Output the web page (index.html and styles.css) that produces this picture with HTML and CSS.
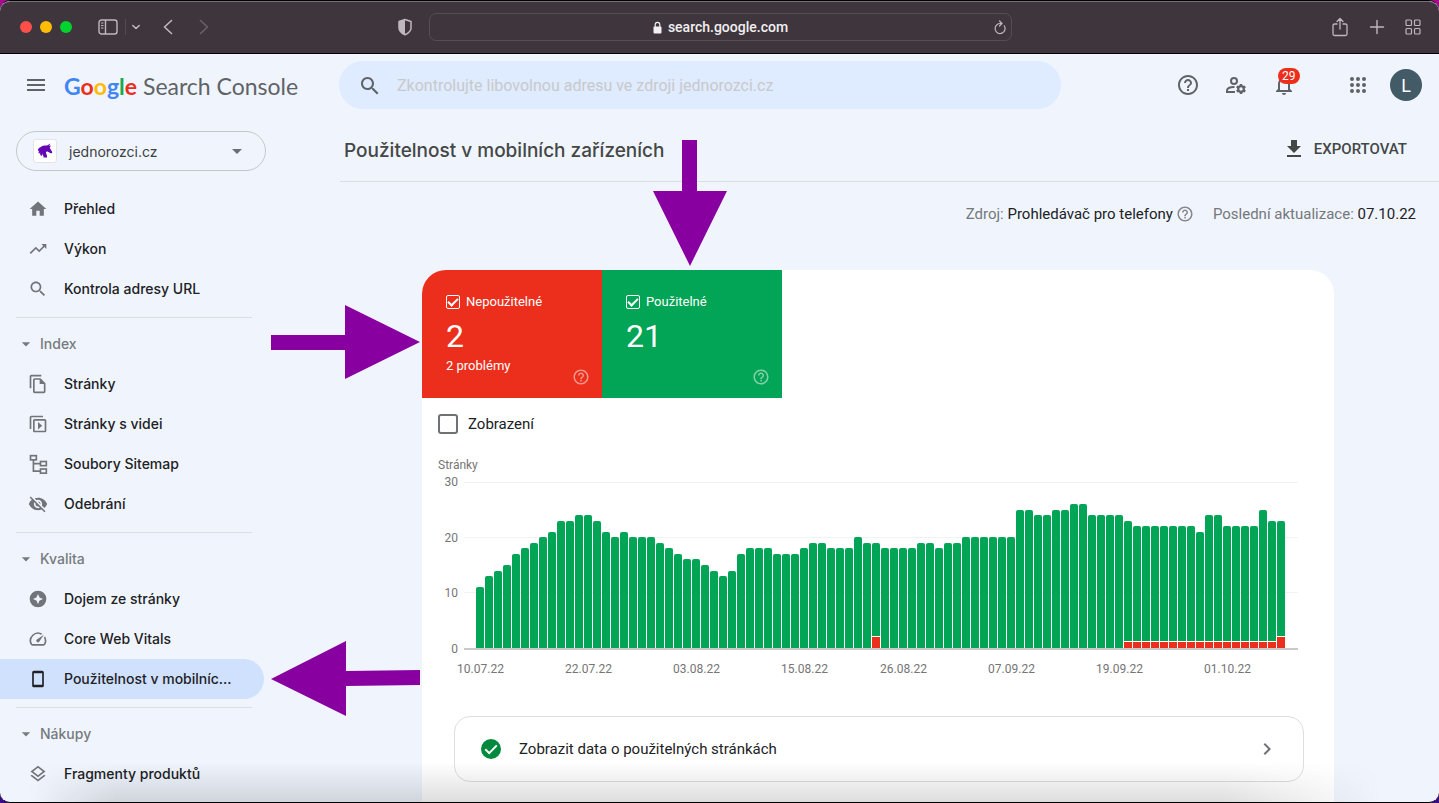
FILE: index.html
```html
<!DOCTYPE html>
<html lang="cs">
<head>
<meta charset="utf-8">
<meta name="viewport" content="width=device-width, initial-scale=1">
<title>Použitelnost v mobilních zařízeních</title>
<link rel="stylesheet" href="styles.css">
</head>
<body>
<svg class="defs" aria-hidden="true">
  <symbol id="i-help" viewBox="0 0 24 24"><path d="M11 18h2v-2h-2v2zm1-16C6.480 2 2 6.480 2 12s4.480 10 10 10 10-4.480 10-10S17.520 2 12 2zm0 18c-4.410 0-8-3.590-8-8s3.590-8 8-8 8 3.590 8 8-3.590 8-8 8zm0-14c-2.210 0-4 1.790-4 4h2c0-1.100.9-2 2-2s2 .9 2 2c0 2-3 1.750-3 5h2c0-2.250 3-2.500 3-5 0-2.210-1.790-4-4-4z"/></symbol>
  <symbol id="i-search" viewBox="0 0 24 24"><path d="M15.500 14h-.79l-.28-.27C15.410 12.590 16 11.110 16 9.500 16 5.910 13.090 3 9.500 3S3 5.910 3 9.500 5.910 16 9.500 16c1.610 0 3.090-.59 4.230-1.570l.27.28v.79l5 4.990L20.490 19l-4.990-5zm-6 0C7.010 14 5 11.990 5 9.500S7.010 5 9.500 5 14 7.010 14 9.500 11.990 14 9.500 14z"/></symbol>
  <symbol id="i-caret" viewBox="0 0 24 24"><path d="M7 10l5 5 5-5z"/></symbol>
</svg>
<div class="window">
  <header class="browser-bar">
    <div class="browser-left">
      <span class="light light-red"></span><span class="light light-yellow"></span><span class="light light-green"></span>
      <button class="bar-btn btn-sidebar" aria-label="Postranní panel"><svg width="20" height="16" viewBox="0 0 20 16" fill="none" stroke="currentColor"><rect x="1" y="1" width="18" height="14" rx="2.500" stroke-width="1.400"/><path d="M7.500 1v14" stroke-width="1.400"/><path d="M3 4h2.500M3 6.500h2.500M3 9h2.500"/></svg></button>
      <button class="bar-btn btn-tabs" aria-label="Skupiny panelů"><svg width="10" height="6" viewBox="0 0 10 6" fill="none" stroke="currentColor" stroke-width="1.600" stroke-linecap="round" stroke-linejoin="round"><path d="M1.800 1.500L5 4.500l3.200-3"/></svg></button>
      <button class="bar-btn btn-back" aria-label="Zpět"><svg width="10" height="16" viewBox="0 0 10 16" fill="none" stroke="currentColor" stroke-width="1.600" stroke-linecap="round" stroke-linejoin="round"><path d="M8.500 1.500L1.500 8l7 6.500"/></svg></button>
      <button class="bar-btn btn-forward" aria-label="Vpřed"><svg width="10" height="16" viewBox="0 0 10 16" fill="none" stroke="currentColor" stroke-width="1.600" stroke-linecap="round" stroke-linejoin="round"><path d="M1.500 1.500l7 6.500-7 6.500"/></svg></button>
    </div>
    <div class="browser-address">
      <button class="bar-btn" aria-label="Ochrana soukromí"><svg width="16" height="18" viewBox="0 0 16 18"><path d="M8 1.500L14 3.500V10c0 3.300-3 5.400-6 6.800C5 15.400 2 13.300 2 10V3.500z" fill="none" stroke="currentColor" stroke-width="1.500" stroke-linejoin="round"/><path d="M8 1.500v15.300C5 15.400 2 13.300 2 10V3.500z" fill="currentColor"/></svg></button>
      <div class="url-box">
        <span class="url-text"><svg width="9" height="13" viewBox="0 0 9 13"><rect x="0.500" y="5.500" width="8" height="7" rx="1" fill="currentColor"/><path d="M2.200 6V3.600a2.300 2.300 0 0 1 4.600 0V6" fill="none" stroke="currentColor" stroke-width="1.200"/></svg>search.google.com</span>
        <button class="bar-btn btn-reload" aria-label="Obnovit"><svg width="14" height="15" viewBox="0 0 14 15" fill="none" stroke="currentColor" stroke-width="1.200" stroke-linecap="round" stroke-linejoin="round"><path d="M11.300 5.800A5 5 0 1 1 7 3.500h1.600"/><path d="M6.500 1l2.500 2.500L6.500 6"/></svg></button>
      </div>
    </div>
    <div class="browser-right">
      <button class="bar-btn" aria-label="Sdílet"><svg width="18" height="20" viewBox="0 0 18 20" fill="none" stroke="currentColor" stroke-width="1.300" stroke-linecap="round" stroke-linejoin="round"><path d="M6 7H3.500C2.500 7 2 7.500 2 8.500V17c0 1 .5 1.500 1.500 1.500h11c1 0 1.500-.5 1.500-1.500V8.500c0-1-.5-1.500-1.500-1.500H12"/><path d="M9 12V1.500M6 4.500l3-3 3 3"/></svg></button>
      <button class="bar-btn" aria-label="Nový panel"><svg width="16" height="16" viewBox="0 0 16 16" stroke="currentColor" stroke-width="1.400" stroke-linecap="round"><path d="M8 1.500v13M1.500 8h13"/></svg></button>
      <button class="bar-btn" aria-label="Přehled panelů"><svg width="16" height="16" viewBox="0 0 16 16" fill="none" stroke="currentColor" stroke-width="1.200"><rect x="1" y="1" width="5.500" height="5.500" rx="1"/><rect x="9.500" y="1" width="5.500" height="5.500" rx="1"/><rect x="1" y="9.500" width="5.500" height="5.500" rx="1"/><rect x="9.500" y="9.500" width="5.500" height="5.500" rx="1"/></svg></button>
    </div>
  </header>

  <div class="app">
    <header class="app-header">
      <div class="brand">
        <button class="icon-btn" aria-label="Hlavní nabídka"><svg width="24" height="24" viewBox="0 0 24 24"><path d="M3 18h18v-2H3v2zm0-5h18v-2H3v2zm0-7v2h18V6H3z"/></svg></button>
        <a class="logo" href="#"><span class="google"><span class="g-blue">G</span><span class="g-red">o</span><span class="g-yellow">o</span><span class="g-blue">g</span><span class="g-green">l</span><span class="g-red">e</span></span> <span class="product">Search Console</span></a>
      </div>
      <label class="search">
        <svg width="24" height="24"><use href="#i-search"/></svg>
        <input type="text" aria-label="Kontrola adresy URL" placeholder="Zkontrolujte libovolnou adresu ve zdroji jednorozci.cz">
      </label>
      <div class="header-actions">
        <button class="icon-btn" aria-label="Nápověda"><svg width="24" height="24"><use href="#i-help"/></svg></button>
        <button class="icon-btn" aria-label="Uživatelská nastavení"><svg width="24" height="24" viewBox="0 0 24 24" fill="none" stroke="currentColor" stroke-width="2"><circle cx="10" cy="8" r="3"/><path d="M11 19H3v-1.500c0-2.500 3.500-3.700 7.500-3.500"/><circle cx="17" cy="16" r="2.800" stroke-width="2.200"/><path d="M17 11v2.500M17 18.500V21M12.700 13.500l2.100 1.200M19.200 17.300l2.100 1.200M12.700 18.500l2.100-1.200M19.200 14.700l2.100-1.200" stroke-width="2.400"/></svg></button>
        <button class="icon-btn bell" aria-label="Oznámení, 29"><svg width="24" height="24" viewBox="0 0 24 24"><path d="M12 22c1.100 0 2-.9 2-2h-4c0 1.100.89 2 2 2zm6-6v-5c0-3.070-1.640-5.640-4.500-6.320V4c0-.83-.67-1.500-1.500-1.500s-1.500.67-1.500 1.500v.68C7.630 5.360 6 7.920 6 11v5l-2 2v1h16v-1l-2-2zm-2 1H8v-6c0-2.480 1.510-4.500 4-4.500s4 2.020 4 4.500v6z"/></svg><span class="badge">29</span></button>
        <button class="icon-btn apps" aria-label="Aplikace Google"><svg width="24" height="24" viewBox="0 0 24 24"><circle cx="6" cy="6" r="2"/><circle cx="12" cy="6" r="2"/><circle cx="18" cy="6" r="2"/><circle cx="6" cy="12" r="2"/><circle cx="12" cy="12" r="2"/><circle cx="18" cy="12" r="2"/><circle cx="6" cy="18" r="2"/><circle cx="12" cy="18" r="2"/><circle cx="18" cy="18" r="2"/></svg></button>
        <button class="avatar" aria-label="Účet Google">L</button>
      </div>
    </header>

    <div class="body">
      <aside class="sidebar">
        <button class="property">
          <span class="favicon"><svg width="16" height="16" viewBox="0 0 16 16"><path d="M1 6.500C1.500 5 3 4.500 4.500 3.500 6.500 2.200 8 2.300 10 2.500L13.500.5 12 3l2-.5-1.300 2.300 2.500 4.200c.2 1.200-1 1.700-2 1.100L10.500 8.500C9.300 8.400 8.800 9 9 10c.3 1.500 1.500 2.500 1 4.500H6.500C7 13 5.500 12.500 5.500 10.500L4.800 13C3.300 12.500 2.800 11 3.200 9.500L2 10.800C1.200 9.800 1.800 8.500 2.200 7.500L.8 8z"/></svg></span>
          <span class="property-name">jednorozci.cz</span>
          <svg width="24" height="24"><use href="#i-caret"/></svg>
        </button>
        <nav class="nav">
          <a class="nav-item" href="#"><svg width="20" height="20" viewBox="0 0 24 24"><path d="M10 20v-6h4v6h5v-8h3L12 3 2 12h3v8z"/></svg><span>Přehled</span></a>
          <a class="nav-item" href="#"><svg width="20" height="20" viewBox="0 0 24 24"><path d="M16 6l2.290 2.290-4.880 4.880-4-4L2 16.590 3.410 18l6-6 4 4 6.300-6.290L22 12V6z"/></svg><span>Výkon</span></a>
          <a class="nav-item" href="#"><svg width="20" height="20"><use href="#i-search"/></svg><span>Kontrola adresy URL</span></a>
          <hr>
          <button class="nav-group"><svg width="20" height="20"><use href="#i-caret"/></svg>Index</button>
          <a class="nav-item" href="#"><svg width="20" height="20" viewBox="0 0 24 24"><path d="M16 1H4c-1.100 0-2 .9-2 2v14h2V3h12V1zm-1 4H8c-1.100 0-2 .9-2 2v14c0 1.100.9 2 2 2h11c1.100 0 2-.9 2-2V11l-6-6zM8 21V7h6v5h5v9H8z"/></svg><span>Stránky</span></a>
          <a class="nav-item" href="#"><svg width="20" height="20" viewBox="0 0 24 24"><path d="M18 2H4c-1.100 0-2 .9-2 2v14h2V4h14V2z"/><path d="M20 6H8c-1.100 0-2 .9-2 2v12c0 1.100.9 2 2 2h12c1.100 0 2-.9 2-2V8c0-1.100-.9-2-2-2zm0 14H8V8h12v12zM12 9.500v9l5-4.500z"/></svg><span>Stránky s videi</span></a>
          <a class="nav-item" href="#"><svg width="20" height="20" viewBox="0 0 24 24" fill="none" stroke="currentColor" stroke-width="2"><rect x="3" y="2" width="7" height="5"/><rect x="15" y="9" width="7" height="5"/><rect x="15" y="18" width="7" height="5"/><path d="M6.500 7v13.500H15M6.500 11.500H15"/></svg><span>Soubory Sitemap</span></a>
          <a class="nav-item" href="#"><svg width="20" height="20" viewBox="0 0 24 24"><path d="M12 7c2.760 0 5 2.240 5 5 0 .65-.13 1.260-.36 1.830l2.920 2.920c1.510-1.260 2.700-2.890 3.430-4.750-1.730-4.390-6-7.500-11-7.500-1.400 0-2.740.25-3.980.7l2.160 2.160C10.740 7.130 11.350 7 12 7zM2 4.270l2.280 2.280.46.46C3.080 8.300 1.780 10.020 1 12c1.730 4.390 6 7.500 11 7.500 1.550 0 3.030-.3 4.380-.84l.42.42L19.730 22 21 20.730 3.270 3 2 4.270zM7.530 9.800l1.550 1.550c-.05.21-.08.43-.08.65 0 1.660 1.340 3 3 3 .22 0 .44-.03.65-.08l1.550 1.550c-.67.33-1.410.53-2.200.53-2.760 0-5-2.240-5-5 0-.79.2-1.530.53-2.200zm4.310-.78l3.150 3.150.02-.16c0-1.660-1.340-3-3-3l-.17.01z"/></svg><span>Odebrání</span></a>
          <hr>
          <button class="nav-group"><svg width="20" height="20"><use href="#i-caret"/></svg>Kvalita</button>
          <a class="nav-item" href="#"><svg width="20" height="20" viewBox="0 0 24 24"><path fill-rule="evenodd" d="M12 2a10 10 0 1 0 0 20 10 10 0 0 0 0-20zm0 4l1.900 4.100L18 12l-4.100 1.900L12 18l-1.900-4.100L6 12l4.100-1.900z"/></svg><span>Dojem ze stránky</span></a>
          <a class="nav-item" href="#"><svg width="20" height="20" viewBox="0 0 24 24"><path d="M20.380 8.570l-1.230 1.850a8 8 0 0 1-.22 7.580H5.070A8 8 0 0 1 15.580 6.850l1.850-1.230A10 10 0 0 0 3.350 19a2 2 0 0 0 1.720 1h13.850a2 2 0 0 0 1.740-1 10 10 0 0 0-.27-10.440zm-9.790 6.840a2 2 0 0 0 2.830 0l5.660-8.490-8.490 5.660a2 2 0 0 0 0 2.830z"/></svg><span>Core Web Vitals</span></a>
          <a class="nav-item active" href="#" aria-current="page"><svg width="20" height="20" viewBox="0 0 24 24"><path fill-rule="evenodd" d="M7 2h10a2 2 0 0 1 2 2v16a2 2 0 0 1-2 2H7a2 2 0 0 1-2-2V4a2 2 0 0 1 2-2zm0 3v14h10V5z"/></svg><span>Použitelnost v mobilníc...</span></a>
          <hr>
          <button class="nav-group"><svg width="20" height="20"><use href="#i-caret"/></svg>Nákupy</button>
          <a class="nav-item" href="#"><svg width="20" height="20" viewBox="0 0 24 24"><path d="M11.990 18.540l-7.370-5.730L3 14.070l9 7 9-7-1.630-1.270-7.380 5.740zM12 16l7.360-5.730L21 9l-9-7-9 7 1.630 1.270L12 16zm0-11.470L17.740 9 12 13.470 6.260 9 12 4.530z"/></svg><span>Fragmenty produktů</span></a>
        </nav>
      </aside>

      <main class="main">
        <div class="title-row">
          <h1>Použitelnost v mobilních zařízeních</h1>
          <button class="export"><svg width="24" height="24" viewBox="0 0 24 24"><path d="M19 9h-4V3H9v6H5l7 7 7-7zM5 18v2h14v-2H5z"/></svg>EXPORTOVAT</button>
        </div>
        <div class="meta">
          <span class="meta-item"><span>Zdroj: <b>Prohledávač pro telefony</b></span><button class="help" aria-label="Nápověda ke zdroji"><svg width="18" height="18"><use href="#i-help"/></svg></button></span>
          <span class="meta-item"><span>Poslední aktualizace: <b>07.10.22</b></span></span>
        </div>
        <section class="card">
          <div class="tiles">
            <div class="tile tile-bad">
              <label class="tile-label"><input type="checkbox" class="tile-check" checked>Nepoužitelné</label>
              <div class="tile-value">2</div>
              <div class="tile-note">2 problémy</div>
              <button class="help" aria-label="Nápověda: Nepoužitelné"><svg width="18" height="18"><use href="#i-help"/></svg></button>
            </div>
            <div class="tile tile-good">
              <label class="tile-label"><input type="checkbox" class="tile-check" checked>Použitelné</label>
              <div class="tile-value">21</div>
              <button class="help" aria-label="Nápověda: Použitelné"><svg width="18" height="18"><use href="#i-help"/></svg></button>
            </div>
          </div>
          <label class="impressions"><input type="checkbox">Zobrazení</label>
          <div class="chart">
            <div class="axis-title">Stránky</div>
            <div class="plot-row">
              <div class="y-axis"><span>30</span><span>20</span><span>10</span><span>0</span></div>
              <div class="plot"><div class="bars" id="bars"></div></div>
            </div>
            <div class="x-axis"><span>10.07.22</span><span>22.07.22</span><span>03.08.22</span><span>15.08.22</span><span>26.08.22</span><span>07.09.22</span><span>19.09.22</span><span>01.10.22</span></div>
          </div>
          <a class="data-link" href="#">
            <svg width="24" height="24" viewBox="0 0 24 24"><circle cx="12" cy="12" r="10" fill="#018a3d"/><path d="M6.300 12.200l3.900 3.900 7.600-7.700" fill="none" stroke="#fff" stroke-width="2"/></svg>
            <span>Zobrazit data o použitelných stránkách</span>
            <svg class="chevron" width="24" height="24" viewBox="0 0 24 24"><path d="M8.590 16.590L13.170 12 8.590 7.410 10 6l6 6-6 6z"/></svg>
          </a>
        </section>
      </main>
    </div>
  </div>
  <div class="fade"></div>
  <svg class="arrow arrow-down" width="74" height="126" viewBox="0 0 74 126"><path d="M29 0h15v51h30L37 126 0 51h29z"/></svg>
  <svg class="arrow arrow-right" width="149" height="74" viewBox="0 0 149 74"><path d="M0 30h74V0l75 37-75 37V45H0z"/></svg>
  <svg class="arrow arrow-left" width="149" height="75" viewBox="0 0 149 75"><path d="M149 29l-74 1V0L0 38l75 37V45l74-1z"/></svg>
</div>
<script src="script.js"></script>
</body>
</html>
```
FILE: styles.css
```css
* {
  box-sizing: border-box;
}

body {
  margin: 0;
  background: linear-gradient(180deg, #a8078f, #3b0a86);
  color: #202124;
  font-family: Roboto, "Noto Sans", sans-serif;
  font-size: 15px;
}

button {
  border: 0;
  padding: 0;
  background: none;
  color: inherit;
  font: inherit;
  cursor: pointer;
}

a {
  color: inherit;
  text-decoration: none;
}

svg {
  display: block;
  flex: none;
  fill: currentColor;
}

svg[fill="none"] {
  fill: none;
}

.defs {
  position: absolute;
  width: 0;
  height: 0;
}

.window {
  position: relative;
  display: flex;
  flex-direction: column;
  height: 100vh;
  overflow: hidden;
  border: solid #000;
  border-width: 1px 0;
  border-radius: 10px;
  background: #f0f5fd;
}

/* Browser toolbar */

.browser-bar {
  display: grid;
  grid-template-columns: minmax(0, 397fr) minmax(0, 615fr) minmax(0, 427fr);
  flex: none;
  height: 53px;
  padding-bottom: 1px;
  border-top: 1px solid #777077;
  border-bottom: 1px solid #000;
  border-radius: 10px 10px 0 0;
  background: #3e363c;
  color: #bfb8be;
}

.browser-left,
.browser-right,
.browser-address {
  display: flex;
  align-items: center;
}

.browser-left {
  padding-left: 20px;
}

.light {
  width: 12px;
  height: 12px;
  margin-right: 8px;
  border-radius: 50%;
}

.light-red { background: #ff4f48; }
.light-yellow { background: #ffbd05; }
.light-green { background: #04d22f; }

.btn-sidebar {
  margin-left: 18px;
  padding-right: 7px;
  border-right: 1px solid #544c52;
}

.btn-tabs { margin-left: 5px; }
.btn-back { margin-left: 22px; }

.btn-forward {
  margin-left: 26px;
  color: #6a6268;
}

.browser-address {
  gap: 16px;
}

.url-box {
  display: flex;
  flex: 1;
  align-items: center;
  height: 28px;
  padding: 0 4px 0 18px;
  border: 1px solid #564e54;
  border-radius: 7px;
}

.url-text {
  display: flex;
  flex: 1;
  align-items: center;
  justify-content: center;
  gap: 6px;
  color: #f1eff1;
  font-size: 14px;
  font-weight: 500;
}

.browser-right {
  justify-content: flex-end;
  gap: 20px;
  padding-right: 18px;
}

/* Application header */

.app {
  display: flex;
  flex: 1;
  flex-direction: column;
  min-height: 0;
}

.app-header {
  display: flex;
  flex: none;
  align-items: center;
  padding: 7px 17px 7px 0;
  color: #5f6368;
}

.brand {
  display: flex;
  flex: none;
  align-items: center;
  gap: 16px;
  width: 339px;
  padding-left: 24px;
}

.logo {
  padding-top: 2px;
  color: #5f6368;
  font-family: Lato, sans-serif;
  font-size: 23px;
  line-height: 32px;
  white-space: nowrap;
}

.google {
  font-weight: 700;
}

.g-blue { color: #4285f4; }
.g-red { color: #ea2f1d; }
.g-yellow { color: #fbbc04; }
.g-green { color: #1aaa4b; }

.search {
  display: flex;
  flex: 1;
  align-items: center;
  gap: 15px;
  max-width: 722px;
  height: 48px;
  padding: 0 19px;
  border-radius: 24px;
  background: #dfebfe;
}

.search svg {
  margin-top: 2px;
}

.search input {
  flex: 1;
  min-width: 0;
  padding: 0;
  border: 0;
  outline: 0;
  background: none;
  color: #202124;
  font: 16px Roboto, sans-serif;
}

.search input::placeholder {
  color: #c8c9cb;
  opacity: 1;
}

.header-actions {
  display: flex;
  flex: none;
  align-items: center;
  gap: 24px;
  margin-left: auto;
}

.bell {
  position: relative;
}

.badge {
  position: absolute;
  top: -5px;
  left: 6px;
  padding: 0 4px;
  border-radius: 8px;
  background: #eb2f1c;
  color: #fff;
  font-size: 12px;
  line-height: 16px;
}

.apps {
  margin-left: 26px;
}

.avatar {
  width: 32px;
  height: 32px;
  margin-left: -4px;
  border-radius: 50%;
  background: #435b66;
  color: #fff;
  font-size: 18px;
}

/* Sidebar */

.body {
  display: flex;
  flex: 1;
  min-height: 0;
}

.sidebar {
  flex: none;
  width: 340px;
  padding-top: 15px;
  overflow: hidden;
  font-family: Inter, sans-serif;
}

.property {
  display: flex;
  align-items: center;
  width: 250px;
  height: 40px;
  margin-left: 16px;
  padding: 0 16px;
  border: 1px solid #c4c7c9;
  border-radius: 20px;
  color: #3c4043;
  font-size: 14px;
}

.property > svg {
  color: #6b6f72;
}

.property-name {
  flex: 1;
  margin-left: 12px;
  text-align: left;
}

.favicon {
  display: grid;
  place-items: center;
  width: 24px;
  height: 24px;
  border: 1px solid #e2e4e6;
  border-radius: 3px;
  background: #fff;
  color: #6406b4;
}

.nav {
  padding-top: 18px;
}

.nav-item {
  display: flex;
  align-items: center;
  gap: 16px;
  width: 264px;
  height: 40px;
  padding: 0 16px 0 28px;
  border-radius: 0 20px 20px 0;
  font-size: 14px;
  font-weight: 500;
}

.nav-item svg {
  color: #717478;
}

.nav-item span {
  line-height: 20px;
  white-space: nowrap;
}

.nav-item.active {
  background: #d0e1fe;
}

.nav-item.active svg {
  color: #202124;
}

.nav-group {
  display: flex;
  align-items: center;
  gap: 4px;
  height: 40px;
  padding: 0 0 1px 16px;
  color: #777a7e;
  font-size: 14px;
  font-weight: 500;
}

.nav hr {
  width: 236px;
  height: 1px;
  margin: 8px 0 6px 16px;
  border: 0;
  background: #dcdfe1;
}

/* Report */

.main {
  flex: 1;
  min-width: 0;
  overflow: hidden;
}

.title-row {
  display: flex;
  align-items: center;
  justify-content: space-between;
  height: 66px;
  padding: 0 32px 0 4px;
  border-bottom: 1px solid #dcdfe1;
}

h1 {
  margin: 0;
  padding-top: 4px;
  color: #444746;
  font-family: Inter, sans-serif;
  font-size: 19px;
  font-weight: 500;
}

.export {
  display: flex;
  align-items: center;
  gap: 8px;
  color: #444746;
  font-size: 15px;
  font-weight: 500;
}

.meta {
  display: flex;
  justify-content: flex-end;
  gap: 19px;
  padding: 22px 23px 46px 0;
  color: #75787b;
  line-height: 20px;
}

.meta-item {
  display: flex;
  align-items: center;
  gap: 3px;
}

.meta b {
  color: #202124;
  font-weight: 400;
}

.meta .help {
  color: #85888b;
}

.card {
  margin: 0 105px 0 82px;
  padding-bottom: 40px;
  overflow: hidden;
  border-radius: 24px;
  background: #fff;
}

.tiles {
  display: flex;
}

.tile {
  position: relative;
  width: 180px;
  height: 128px;
  padding: 24px 24px 0;
  color: #fff;
  font-size: 13px;
}

.tile-bad { background: #eb2f1c; }
.tile-good { background: #02a455; }

.tile-label {
  display: flex;
  align-items: center;
  gap: 6px;
  line-height: 16px;
}

.tile-check {
  display: grid;
  place-items: center;
  width: 14px;
  height: 14px;
  margin: 0;
  border: 1px solid #fff;
  border-radius: 2px;
  appearance: none;
}

.tile-check:checked::before {
  width: 8px;
  height: 4px;
  border: solid #fff;
  border-width: 0 0 2px 2px;
  transform: translateY(-1px) rotate(-45deg);
  content: "";
}

.tile-value {
  margin-top: 6px;
  font-size: 32px;
  line-height: 40px;
}

.tile-note {
  margin-top: 2px;
  line-height: 16px;
}

.tile .help {
  position: absolute;
  right: 12px;
  bottom: 12px;
  opacity: 0.5;
}

.impressions {
  display: flex;
  align-items: center;
  gap: 10px;
  width: max-content;
  padding: 16px 16px 0;
  line-height: 20px;
}

.impressions input {
  width: 20px;
  height: 20px;
  margin: 0;
  border: 2px solid #6f7275;
  border-radius: 3px;
  appearance: none;
}

.chart {
  padding: 23px 36px 0 16px;
  color: #757575;
  font-size: 12px;
}

.axis-title {
  line-height: 16px;
}

.plot-row {
  display: flex;
  gap: 6px;
  height: 168px;
  margin-top: 9px;
}

.y-axis {
  display: flex;
  flex-direction: column;
  justify-content: space-between;
  width: 20px;
  margin: -8px 0 -7px;
  line-height: 16px;
  text-align: right;
}

.plot {
  flex: 1;
  min-width: 0;
  padding: 0 12px;
  border-bottom: 2px solid #c9c9c9;
  background:
    linear-gradient(#f1f2f3, #f1f2f3) 0 0 / 100% 1px no-repeat,
    linear-gradient(#f1f2f3, #f1f2f3) 0 55px / 100% 1px no-repeat,
    linear-gradient(#f1f2f3, #f1f2f3) 0 110px / 100% 1px no-repeat;
}

.bars {
  display: flex;
  align-items: flex-end;
  height: 100%;
}

.bar {
  display: flex;
  flex: 1;
  flex-direction: column;
  gap: 1px;
  margin-right: 1px;
  overflow: hidden;
  border-radius: 2px 2px 0 0;
}

.bar-good {
  flex: 1;
  background: #02a455;
}

.bar-bad {
  background: #eb2f1c;
}

/* One grid column per bar, so each label is centred under its day */
.x-axis {
  display: grid;
  grid-template-columns: repeat(90, minmax(0, 1fr));
  padding: 11px 12px 0 38px;
  line-height: 16px;
}

.x-axis span {
  grid-row: 1;
  justify-self: center;
}

.x-axis span:nth-child(1) { grid-column: 1; }
.x-axis span:nth-child(2) { grid-column: 13; }
.x-axis span:nth-child(3) { grid-column: 25; }
.x-axis span:nth-child(4) { grid-column: 37; }
.x-axis span:nth-child(5) { grid-column: 48; }
.x-axis span:nth-child(6) { grid-column: 60; }
.x-axis span:nth-child(7) { grid-column: 72; }
.x-axis span:nth-child(8) { grid-column: 84; }

.data-link {
  display: flex;
  align-items: center;
  gap: 16px;
  height: 66px;
  margin: 39px 30px 0 32px;
  padding: 0 24px;
  border: 1px solid #dcdee0;
  border-radius: 16px;
}

.data-link span {
  flex: 1;
}

.chevron {
  color: #6f7275;
}

/* Overlays */

.fade {
  position: absolute;
  right: 0;
  bottom: 0;
  left: 0;
  height: 40px;
  background: linear-gradient(rgba(0, 0, 0, 0), rgba(0, 0, 0, 0.13));
  -webkit-mask-image: linear-gradient(90deg, transparent 2%, #000 8%, #000 85%, transparent 96%);
  mask-image: linear-gradient(90deg, transparent 2%, #000 8%, #000 85%, transparent 96%);
  pointer-events: none;
}

.arrow {
  position: absolute;
  fill: #8900a1;
  pointer-events: none;
}

.arrow-down { top: 139px; left: 653px; }
.arrow-right { top: 304px; left: 271px; }
.arrow-left { top: 640px; left: 271px; }
```
FILE: script.js
```js
const totals = [
  11, 13, 14, 15, 17, 18, 19, 20, 21, 23, 23, 24, 24, 23, 21, 20, 21, 20, 20, 20,
  19, 18, 17, 16, 16, 15, 14, 13, 14, 17, 18, 18, 18, 17, 17, 17, 18, 19, 19, 18,
  18, 18, 20, 19, 19, 18, 18, 18, 18, 19, 19, 18, 19, 19, 20, 20, 20, 20, 20, 20,
  25, 25, 24, 24, 25, 25, 26, 26, 24, 24, 24, 24, 23, 22, 22, 22, 22, 22, 22, 22,
  21, 24, 24, 22, 22, 22, 22, 25, 23, 23
];
const scaleMax = 30;
const unusable = (day) => (day === 44 || day === 89 ? 2 : day >= 72 ? 1 : 0);

document.getElementById("bars").innerHTML = totals
  .map((total, day) => {
    const bad = unusable(day);
    const badPart = bad ? `<div class="bar-bad" style="height:${(bad / total) * 100}%"></div>` : "";
    return `<div class="bar" style="height:${(total / scaleMax) * 100}%"><div class="bar-good"></div>${badPart}</div>`;
  })
  .join("");
```
